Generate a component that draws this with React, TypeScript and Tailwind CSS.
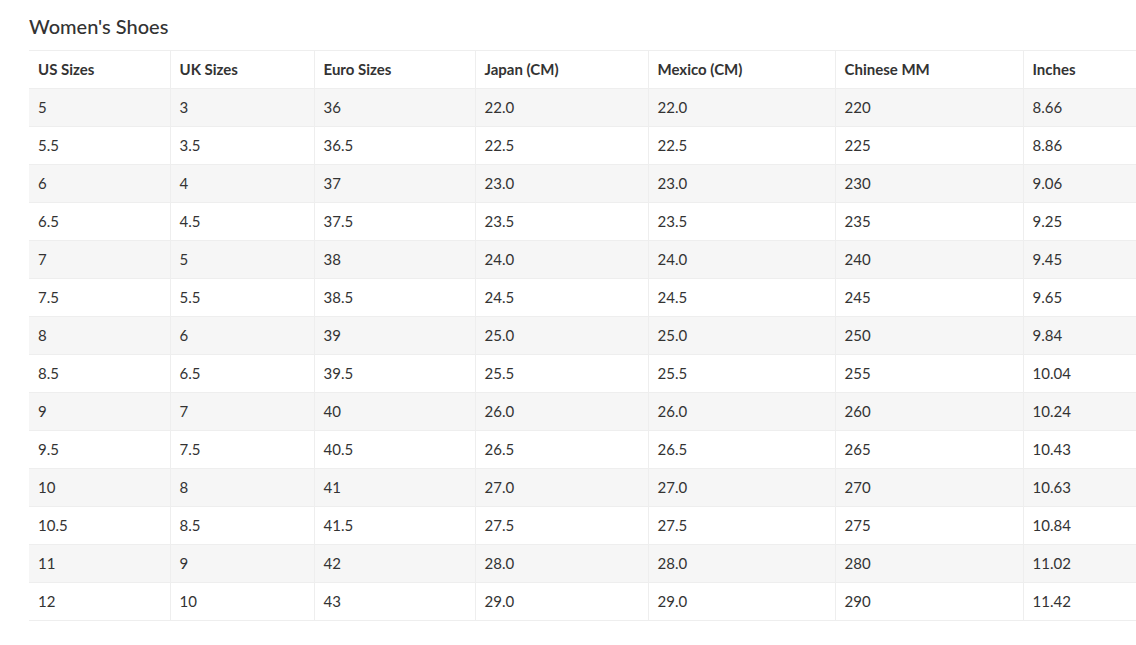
import React from 'react'

const headers = ['US Sizes', 'UK Sizes', 'Euro Sizes', 'Japan (CM)', 'Mexico (CM)', 'Chinese MM', 'Inches']
const widths = ['w-[141px]', 'w-[144px]', 'w-[161px]', 'w-[173px]', 'w-[187px]', 'w-[188px]', 'w-[140px]']

const rows = [
  ['5', '3', '36', '22.0', '22.0', '220', '8.66'],
  ['5.5', '3.5', '36.5', '22.5', '22.5', '225', '8.86'],
  ['6', '4', '37', '23.0', '23.0', '230', '9.06'],
  ['6.5', '4.5', '37.5', '23.5', '23.5', '235', '9.25'],
  ['7', '5', '38', '24.0', '24.0', '240', '9.45'],
  ['7.5', '5.5', '38.5', '24.5', '24.5', '245', '9.65'],
  ['8', '6', '39', '25.0', '25.0', '250', '9.84'],
  ['8.5', '6.5', '39.5', '25.5', '25.5', '255', '10.04'],
  ['9', '7', '40', '26.0', '26.0', '260', '10.24'],
  ['9.5', '7.5', '40.5', '26.5', '26.5', '265', '10.43'],
  ['10', '8', '41', '27.0', '27.0', '270', '10.63'],
  ['10.5', '8.5', '41.5', '27.5', '27.5', '275', '10.84'],
  ['11', '9', '42', '28.0', '28.0', '280', '11.02'],
  ['12', '10', '43', '29.0', '29.0', '290', '11.42'],
]

export default function App() {
  return (
    <div className="min-h-[645px] w-[1136px] overflow-hidden bg-white pl-[29px] pt-[14px] font-['Lato','Open_Sans',sans-serif] text-[#333]">
      <h2 className="mb-[12px] text-[20px] leading-[24px] font-medium text-[#333]">Women's Shoes</h2>
      <table className="w-[1134px] table-fixed border-collapse text-[15px]">
        <colgroup>
          {widths.map((w, i) => (
            <col key={i} className={w} />
          ))}
        </colgroup>
        <thead>
          <tr className="h-[38px] border-t border-b border-[#eeeeee]">
            {headers.map((h) => (
              <th key={h} className="border-r border-[#eeeeee] px-[9px] text-left font-bold text-[#333] last:border-r-0">
                {h}
              </th>
            ))}
          </tr>
        </thead>
        <tbody>
          {rows.map((r, i) => (
            <tr key={i} className={`h-[38px] border-b border-[#eeeeee] ${i % 2 === 0 ? 'bg-[#f6f6f6]' : 'bg-white'}`}>
              {r.map((c, j) => (
                <td key={j} className="border-r border-[#eeeeee] px-[9px] text-left text-[#333] last:border-r-0">
                  {c}
                </td>
              ))}
            </tr>
          ))}
        </tbody>
      </table>
    </div>
  )
}
